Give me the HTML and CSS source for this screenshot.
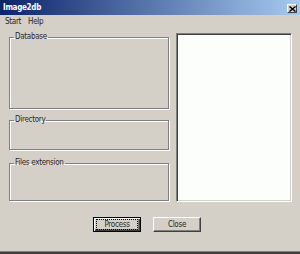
FILE: index.html
```html
<!DOCTYPE html>
<html lang="en">
<head>
    <meta charset="UTF-8">
    <title>Image2db</title>
    <link rel="stylesheet" href="styles.css">
</head>
<body>
    <div class="window">
        <div class="titlebar">
            <span class="title">Image2db</span>
            <span class="close-x">
                <svg width="7" height="6" viewBox="0 0 7 6">
                    <path d="M0.5 0.5 L6.5 5.5 M6.5 0.5 L0.5 5.5" stroke="#000" stroke-width="1.4"/>
                </svg>
            </span>
        </div>
        <div class="menubar">
            <span>Start</span>
            <span>Help</span>
        </div>
        <div class="main">
            <div class="groups">
                <fieldset class="group group-db"><legend>Database</legend></fieldset>
                <fieldset class="group group-dir"><legend>Directory</legend></fieldset>
                <fieldset class="group group-ext"><legend>Files extension</legend></fieldset>
            </div>
            <div class="listbox"></div>
        </div>
        <div class="buttons">
            <button class="btn btn-default"><span class="focus">Process</span></button>
            <button class="btn">Close</button>
        </div>
    </div>
</body>
</html>
```

FILE: styles.css
```css
body {
    margin: 0;
    font-family: "DejaVu Sans", "Liberation Sans", sans-serif;
    font-stretch: condensed;
    font-size: 8px;
    letter-spacing: -0.3px;
    color: #262626;
}

.window {
    width: 300px;
    height: 254px;
    box-sizing: border-box;
    background-color: #d4d0c8; /* classic dialog gray */
    border-bottom: 2px solid #404040;
    box-shadow: inset 0 -1px 0 #808080;
    display: flex;
    flex-direction: column;
}

.titlebar {
    height: 15px;
    background: linear-gradient(to right, #0a246a, #a6caf0);
    display: flex;
    justify-content: space-between;
    align-items: center;
    padding: 0 3px;
}

.title {
    color: white;
    font-weight: bold;
    font-size: 8px;
}

.close-x {
    width: 10px;
    height: 9px;
    margin-top: 2px;
    background-color: #d4d0c8;
    border: 1px solid;
    border-color: #fff #404040 #404040 #fff;
    box-sizing: border-box;
    display: flex;
    justify-content: center;
    align-items: center;
}

.menubar {
    height: 12px;
    display: flex;
    align-items: center;
    gap: 7px;
    padding-left: 5px;
}

.main {
    display: flex;
    gap: 7px;
    padding: 5px 0 0 9px;
}

.groups {
    width: 160px;
    display: flex;
    flex-direction: column;
}

.group {
    margin: 0;
    padding: 0;
    min-inline-size: 0;
    box-sizing: border-box;
    border: 1px solid #808080;
    box-shadow: inset 1px 1px 0 #fff, 1px 1px 0 #fff; /* etched look */
}

.group legend {
    margin-left: 4px;
    padding: 0 1px;
    line-height: 10px;
}

.group-db {
    height: 77px;
}

.group-dir {
    height: 35px;
    margin-top: 6px;
}

.group-ext {
    height: 43px;
    margin-top: 8px;
}

.listbox {
    width: 116px;
    height: 169px;
    margin-top: 1px;
    box-sizing: border-box;
    background-color: #fcfefc;
    border: 1px solid;
    border-color: #808080 #fff #fff #808080;
    box-shadow: inset 1px 1px 0 #404040, inset -1px -1px 0 #d4d0c8;
}

.buttons {
    display: flex;
    gap: 12px;
    padding: 15px 0 0 93px;
}

.btn {
    width: 48px;
    height: 15px;
    padding: 0;
    font-family: inherit;
    font-stretch: condensed;
    font-size: 8px;
    letter-spacing: -0.3px;
    color: #262626;
    background-color: #d4d0c8;
    border: 1px solid;
    border-color: #fff #404040 #404040 #fff;
    box-shadow: inset -1px -1px 0 #808080;
    display: flex;
    justify-content: center;
    align-items: center;
}

.btn-default {
    border: 1px solid #000;
    box-shadow: inset 1px 1px 0 #fff, inset -1px -1px 0 #404040, inset -2px -2px 0 #808080;
}

.focus {
    width: 40px;
    height: 9px;
    line-height: 9px;
    text-align: center;
    outline: 1px dotted #000;
}
```
